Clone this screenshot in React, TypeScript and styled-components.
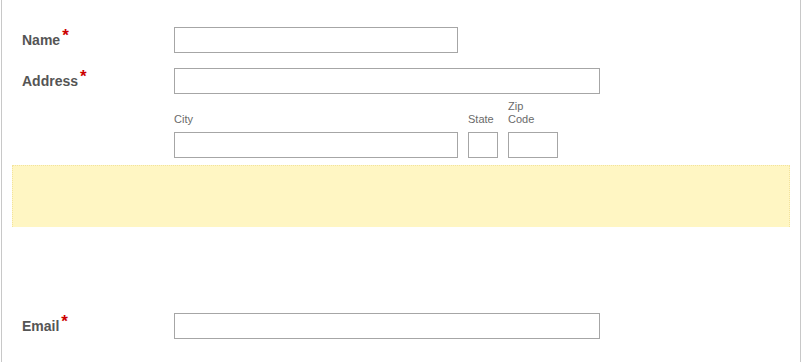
import React from "react";
import styled, { createGlobalStyle } from "styled-components";

const GlobalStyle = createGlobalStyle`
  html, body {
    margin: 0;
    padding: 0;
    background: #fff;
  }
  body {
    font-family: "Liberation Sans", Arial, sans-serif;
  }
`;

const App: React.FC = () => {
  return (
    <>
      <GlobalStyle />
      <Page>
        <Row>
          <Label>
            Name<Required>*</Required>
          </Label>
          <TextInput $width={284} />
        </Row>

        <Row $gap={15}>
          <Label>
            Address<Required>*</Required>
          </Label>
          <FieldStack>
            <TextInput $width={426} />
            <SubFields>
              <SubField $width={284}>
                <SubLabel>City</SubLabel>
                <TextInput $width={284} />
              </SubField>
              <SubField $width={30}>
                <SubLabel>State</SubLabel>
                <TextInput $width={30} />
              </SubField>
              <SubField $width={50}>
                <SubLabel $narrow>Zip Code</SubLabel>
                <TextInput $width={50} />
              </SubField>
            </SubFields>
          </FieldStack>
        </Row>

        <Notice />

        <Row $gap={86}>
          <Label>
            Email<Required>*</Required>
          </Label>
          <TextInput $width={426} />
        </Row>
      </Page>
    </>
  );
};

export default App;

const Page = styled.div`
  box-sizing: border-box;
  width: 800px;
  min-height: 100vh;
  margin-left: 1px;
  padding-top: 27px;
  border-left: 1px solid #c8c8c8;
  border-right: 1px solid #c8c8c8;
  display: flex;
  flex-direction: column;
`;

const Row = styled.div<{ $gap?: number }>`
  display: flex;
  align-items: flex-start;
  padding-left: 20px;
  margin-top: ${({ $gap }) => $gap ?? 0}px;
`;

const Label = styled.label`
  width: 152px;
  flex-shrink: 0;
  font-size: 14px;
  line-height: 23px;
  font-weight: bold;
  color: #555;
`;

const Required = styled.span`
  display: inline-block;
  margin-left: 2px;
  font-size: 17px;
  font-weight: bold;
  line-height: 1;
  color: #c00;
  vertical-align: 4px;
`;

const TextInput = styled.input.attrs({ type: "text" })<{ $width: number }>`
  box-sizing: border-box;
  display: block;
  width: ${({ $width }) => $width}px;
  height: 26px;
  margin: 0;
  padding: 2px 4px;
  border: 1px solid #a6a6a6;
  border-radius: 0;
  background: #fff;
  font-family: "Liberation Sans", Arial, sans-serif;
  font-size: 13px;
  outline: none;
`;

const FieldStack = styled.div`
  display: flex;
  flex-direction: column;
`;

const SubFields = styled.div`
  display: flex;
  gap: 10px;
  margin-top: 6px;
`;

const SubField = styled.div<{ $width: number }>`
  width: ${({ $width }) => $width}px;
  display: flex;
  flex-direction: column;
  justify-content: flex-end;
`;

const SubLabel = styled.span<{ $narrow?: boolean }>`
  display: block;
  width: ${({ $narrow }) => ($narrow ? "36px" : "auto")};
  margin-bottom: 6px;
  font-size: 11px;
  line-height: 13px;
  color: #6a6a6a;
  white-space: ${({ $narrow }) => ($narrow ? "normal" : "nowrap")};
`;

const Notice = styled.div`
  box-sizing: border-box;
  height: 62px;
  margin: 7px 10px 0 10px;
  background: #fff6c3;
  border: 1px dotted #f3e39c;
  border-bottom: none;
`;
